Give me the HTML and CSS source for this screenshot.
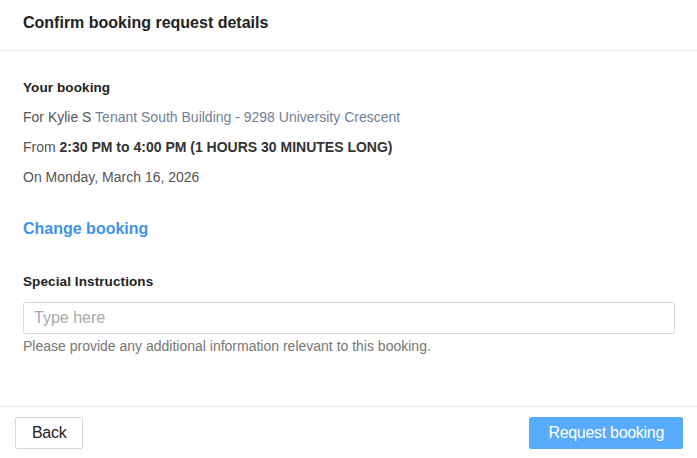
FILE: index.html
```html
<!DOCTYPE html>
<html lang="en">

<head>
    <meta charset="UTF-8">
    <meta name="viewport" content="width=device-width, initial-scale=1.0">
    <title>Confirm booking</title>
    <link rel="stylesheet" href="styles.css">
</head>

<body>
    <div class="modal">
        <div class="modal-header">
            <h2>Confirm booking request details</h2>
        </div>
        <div class="modal-body">
            <h4>Your booking</h4>
            <p class="line">For Kylie S <span class="place">Tenant South Building - 9298 University Crescent</span></p>
            <p class="line">From <b>2:30 PM to 4:00 PM (1 HOURS 30 MINUTES LONG)</b></p>
            <p class="line">On Monday, March 16, 2026</p>

            <a class="change-link" href="#">Change booking</a>

            <h4 class="instructions-title">Special Instructions</h4>
            <input class="text-input" type="text" placeholder="Type here">
            <p class="help">Please provide any additional information relevant to this booking.</p>
        </div>
        <div class="modal-footer">
            <button class="btn">Back</button>
            <button class="btn btn-primary">Request booking</button>
        </div>
    </div>
</body>

</html>
```

FILE: styles.css
```css
body {
    margin: 0;
    padding: 0;
    background-color: #fff;
    font-family: 'Liberation Sans', Arial, sans-serif;
    color: #555;
}

.modal {
    width: 697px;
    height: 458px;
    display: flex;
    flex-direction: column;
}

.modal-header {
    height: 50px;
    border-bottom: 1px solid #e8e8e8;
    padding: 0 23px;
    display: flex;
    align-items: center;
}

.modal-header h2 {
    margin: 0;
    font-size: 16px;
    font-weight: bold;
    color: #222;
    padding-bottom: 5px;
}

.modal-body {
    flex: 1;
    padding: 28px 22px 0 23px;
}

h4 {
    margin: 0;
    font-size: 13.5px;
    font-weight: bold;
    color: #222;
    line-height: 17px;
    letter-spacing: 0.1px;
}

.line {
    margin: 0;
    margin-top: 13px;
    font-size: 14px;
    line-height: 17px;
}

.line b {
    color: #333;
}

.place {
    color: #6f8194;
}

.change-link {
    display: inline-block;
    margin-top: 33px;
    font-size: 16px;
    font-weight: bold;
    color: #3f93ea;
    text-decoration: none;
    line-height: 20px;
}

.instructions-title {
    margin-top: 34px;
}

.text-input {
    display: block;
    box-sizing: border-box;
    width: 652px;
    height: 32px;
    margin-top: 12px;
    border: 1px solid #d9d9d9;
    border-radius: 2px;
    padding: 0 10px;
    font-family: 'Liberation Sans', Arial, sans-serif;
    font-size: 16px;
    color: #333;
}

.text-input::placeholder {
    color: #aaa;
}

.help {
    margin: 4px 0 0;
    font-size: 14px;
    line-height: 16px;
    color: #777;
}

.modal-footer {
    border-top: 1px solid #e8e8e8;
    height: 51px;
    padding: 0 14px 0 15px;
    display: flex;
    justify-content: space-between;
    align-items: center;
}

.btn {
    height: 32px;
    padding: 0 16px;
    border: 1px solid #d9d9d9;
    border-radius: 2px;
    background-color: #fff;
    color: #222;
    font-family: 'Liberation Sans', Arial, sans-serif;
    font-size: 16px;
    letter-spacing: -0.3px;
    cursor: pointer;
}

.btn-primary {
    padding: 0 18px;
    background-color: #58aafc;
    border-color: #58aafc;
    color: #fff;
}
```
